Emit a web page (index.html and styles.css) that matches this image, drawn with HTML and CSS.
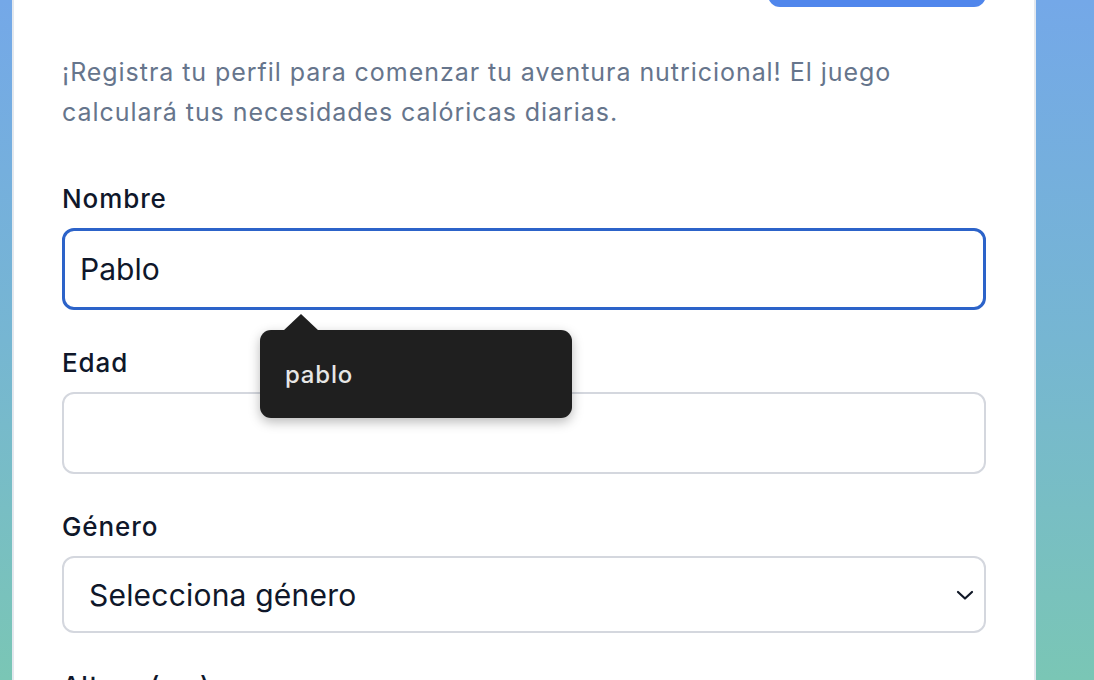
FILE: index.html
```html
<!DOCTYPE html>
<html lang="es">
<head>
<meta charset="utf-8">
<title>Registro</title>
<link rel="stylesheet" href="styles.css">
</head>
<body>
<div class="page">
  <main class="card">
    <header class="card-header">
      <h1 class="title">Perfil</h1>
      <button class="btn-primary" type="button">Empezar</button>
    </header>
    <p class="intro">¡Registra tu perfil para comenzar tu aventura nutricional! El juego calculará tus necesidades calóricas diarias.</p>
    <form class="form">
      <div class="field field-anchor">
        <label class="label" for="nombre">Nombre</label>
        <input class="input input-focus" id="nombre" type="text" value="Pablo">
        <div class="autofill">
          <span class="autofill-arrow"></span>
          <span class="autofill-item">pablo</span>
        </div>
      </div>
      <div class="field">
        <label class="label" for="edad">Edad</label>
        <input class="input" id="edad" type="text">
      </div>
      <div class="field">
        <label class="label" for="genero">Género</label>
        <div class="select">
          <span class="select-text">Selecciona género</span>
          <svg class="chevron" width="18" height="12" viewBox="0 0 18 12"><path d="M2 3 L9 9.5 L16 3" fill="none" stroke="#111827" stroke-width="2.2" stroke-linecap="round" stroke-linejoin="round"/></svg>
        </div>
      </div>
      <div class="field">
        <label class="label" for="altura">Altura (cm)</label>
        <input class="input" id="altura" type="text">
      </div>
    </form>
  </main>
</div>
</body>
</html>
```

FILE: styles.css
```css
* { box-sizing: border-box; }
html, body { margin: 0; padding: 0; }
body {
  height: 680px;
  overflow: hidden;
  background: linear-gradient(180deg, #74a8e8 0%, #76b6d2 50%, #7ac6b5 100%);
  font-family: Inter, "Noto Sans", "Liberation Sans", sans-serif;
}
.page {
  padding: 0 0 0 12px;
  margin-top: -96px;
}
.card {
  width: 1024px;
  background: #fff;
  border: 2px solid #e3e8ee;
  border-radius: 16px;
  padding: 48px 48px 60px;
}
.card-header {
  display: flex;
  align-items: center;
  justify-content: space-between;
  height: 53px;
}
.title {
  margin: 0;
  font-size: 32px;
  color: #0f172a;
}
.btn-primary {
  width: 218px;
  height: 53px;
  border: 0;
  border-radius: 12px;
  background: #5086ec;
  color: #fff;
  font: 600 22px Inter, sans-serif;
}
.intro {
  margin: 45px 0 0;
  font-size: 25px;
  line-height: 40px;
  color: #66758c;
  letter-spacing: 0.95px;
}
.form {
  margin-top: 51px;
  display: flex;
  flex-direction: column;
  gap: 37px;
}
.field {
  display: flex;
  flex-direction: column;
  gap: 13px;
}
.field-anchor { position: relative; }
.label {
  font-size: 26px;
  line-height: 32px;
  font-weight: 450;
  letter-spacing: 0.9px;
  color: #0f172a;
}
.input {
  height: 82px;
  border: 2px solid #d4d7de;
  border-radius: 12px;
  padding: 0 16px;
  font: 400 30px Inter, sans-serif;
  color: #0f172a;
  background: #fff;
  outline: none;
}
.input-focus {
  border: 3px solid #2c63c9;
  padding: 0 15px;
}
.select {
  height: 77px;
  border: 2px solid #d4d7de;
  border-radius: 12px;
  padding: 0 10px 0 25px;
  display: flex;
  align-items: center;
  justify-content: space-between;
}
.select-text {
  font-size: 30px;
  letter-spacing: 0.2px;
  color: #0f172a;
}
.chevron { display: block; }
.autofill {
  position: absolute;
  left: 198px;
  top: 147px;
  width: 312px;
  height: 88px;
  background: #1f1f1f;
  border-radius: 11px;
  box-shadow: 0 4px 12px rgba(0, 0, 0, 0.28);
  display: flex;
  align-items: center;
  padding: 0 25px;
}
.autofill-arrow {
  position: absolute;
  left: 23px;
  top: -16px;
  width: 0;
  height: 0;
  border-left: 18px solid transparent;
  border-right: 18px solid transparent;
  border-bottom: 17px solid #1f1f1f;
}
.autofill-item {
  font-size: 24px;
  font-weight: 550;
  letter-spacing: 0.8px;
  color: #e6e6e6;
}
```
